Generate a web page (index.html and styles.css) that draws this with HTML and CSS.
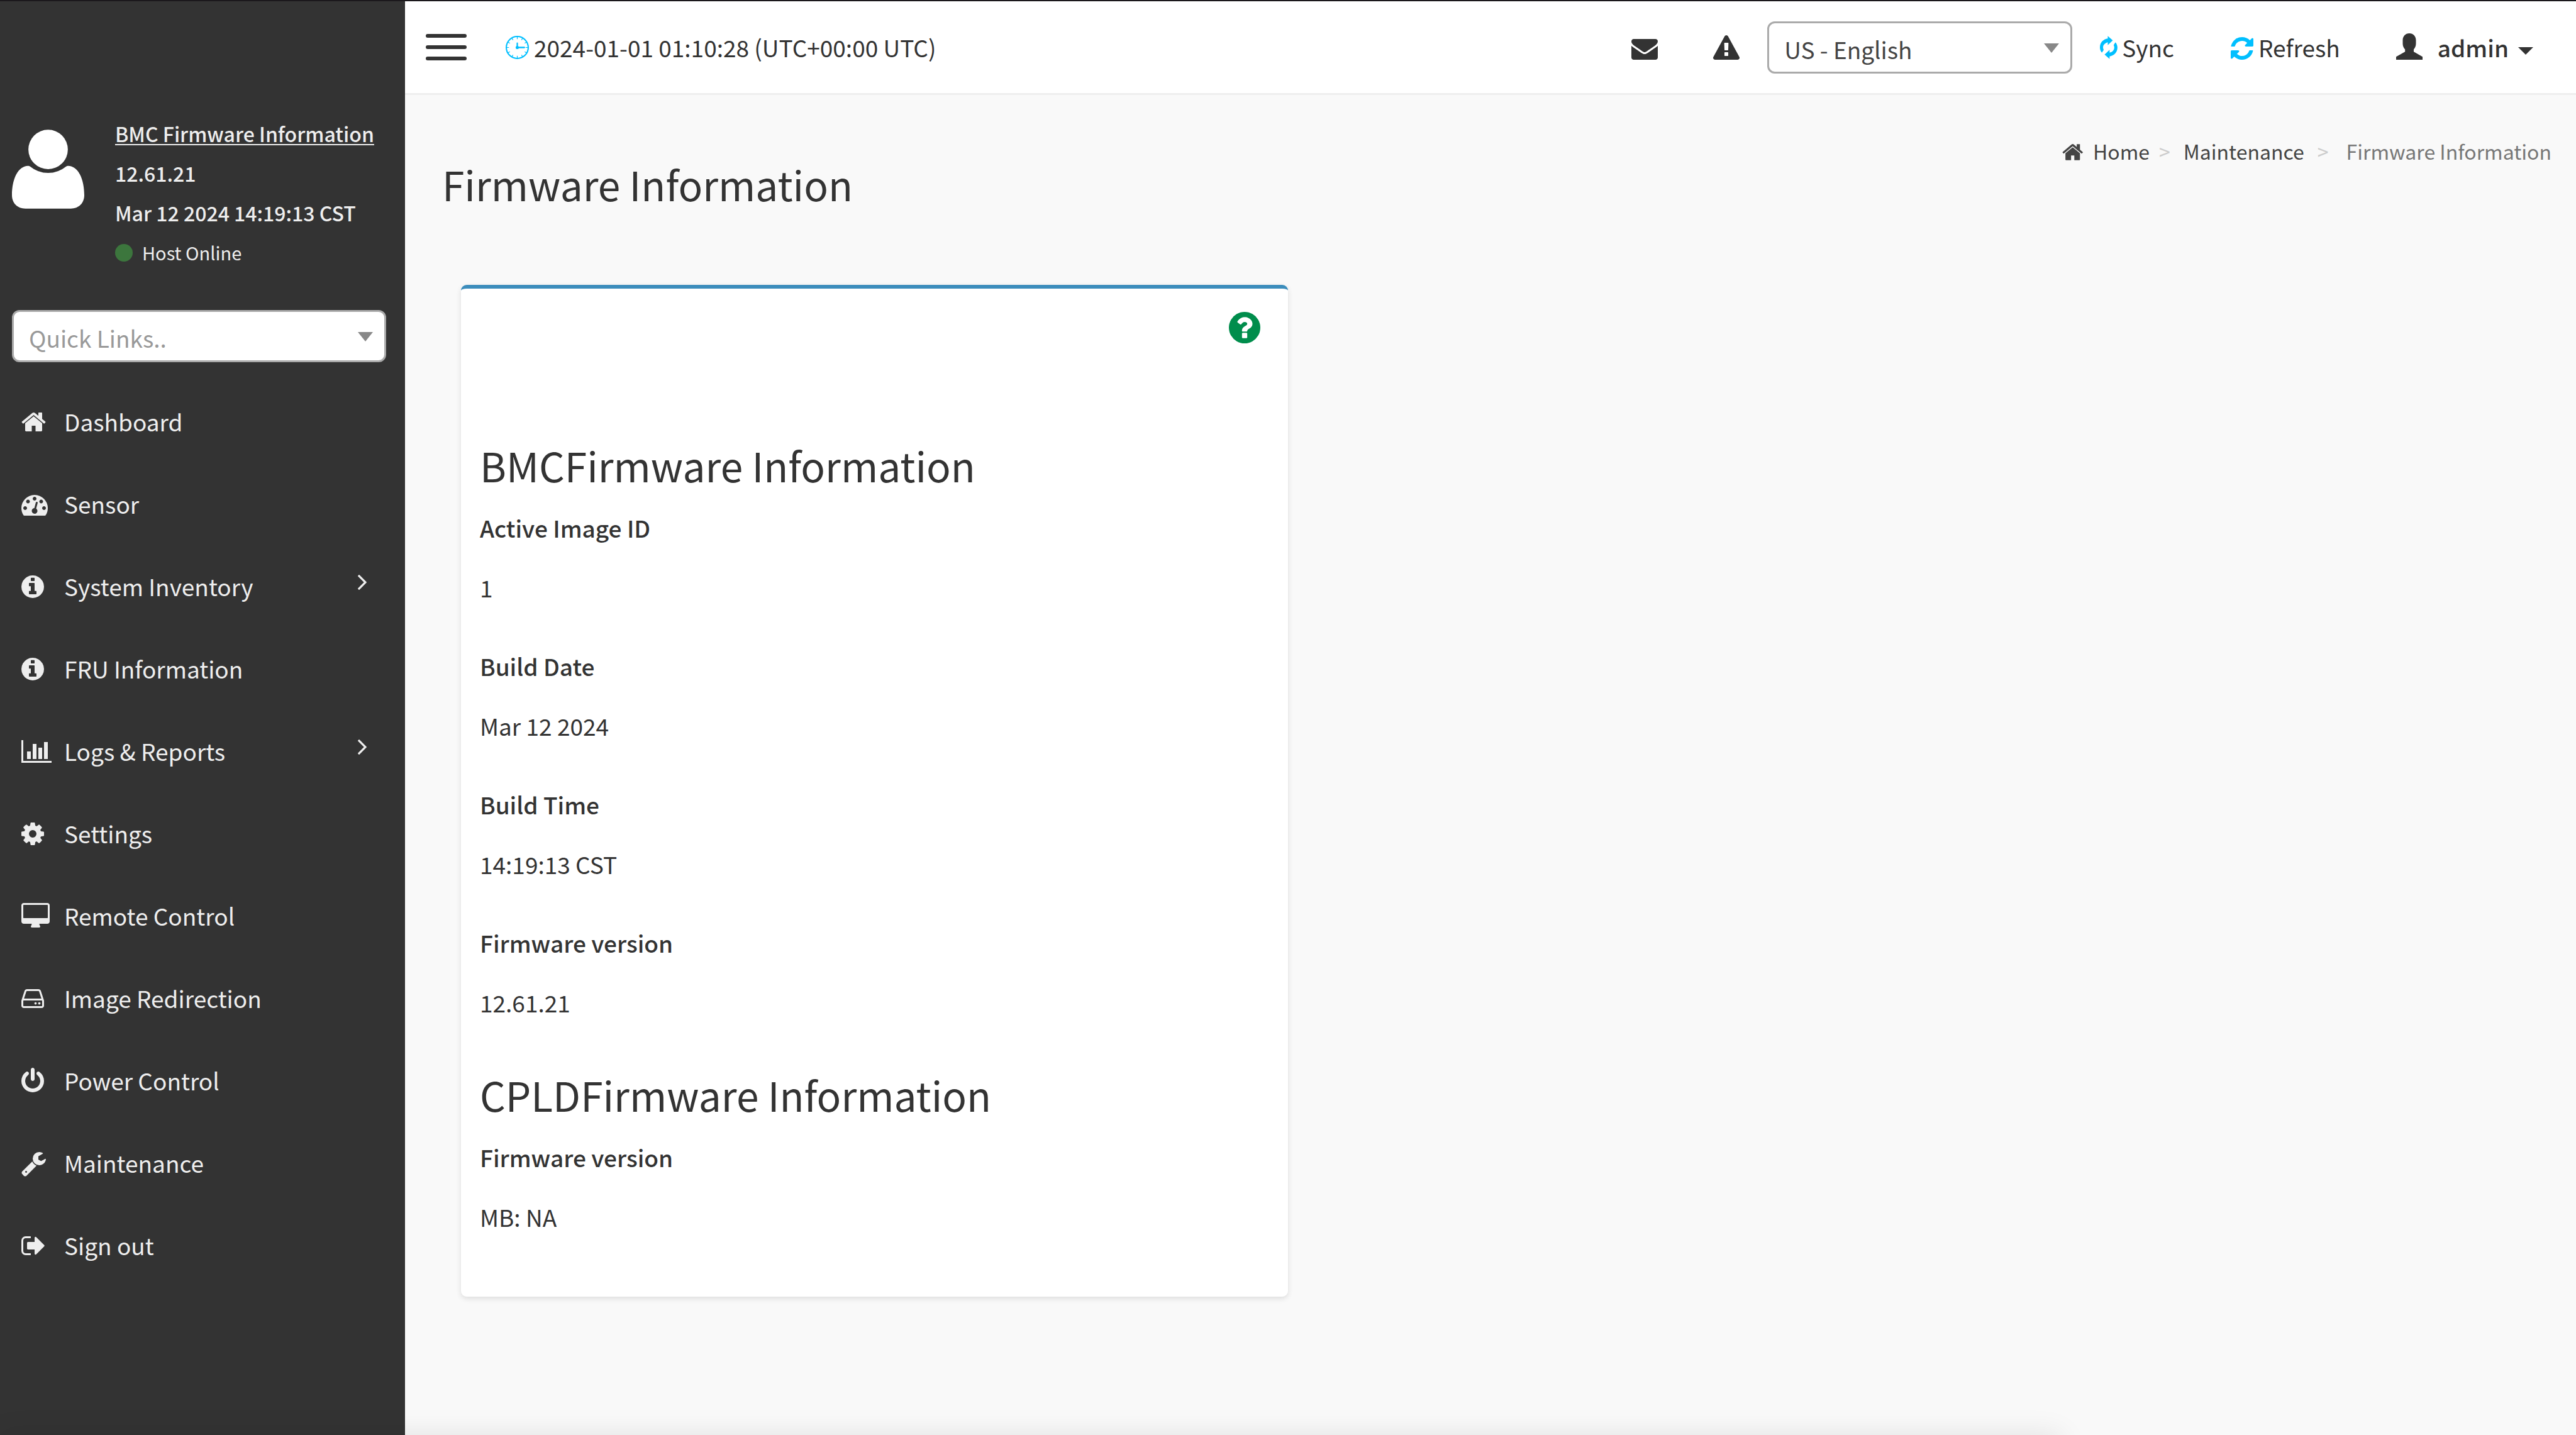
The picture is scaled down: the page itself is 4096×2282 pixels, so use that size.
FILE: index.html
```html
<!DOCTYPE html>
<html lang="en">
<head>
<meta charset="utf-8">
<title>Firmware Information</title>
<link rel="stylesheet" href="styles.css">
</head>
<body>
<svg class="sprite" aria-hidden="true">
  <symbol id="home" viewBox="64 0 1792 1792"><path d="M1472 992v480q0 26-19 45t-45 19h-384v-384h-256v384h-384q-26 0-45-19t-19-45v-480q0-1 .5-3t.5-3l575-474 575 474q1 2 1 6zm223-69l-62 74q-8 9-21 11h-3q-13 0-21-7l-692-577-692 577q-12 8-24 7-13-2-21-11l-62-74q-8-10-7-23.5t11-21.5l719-599q32-26 76-26t76 26l244 204v-195q0-14 9-23t23-9h192q14 0 23 9t9 23v408l219 182q10 8 11 21.5t-7 23.5z"/></symbol>
  <symbol id="gauge" viewBox="0 0 1792 1792"><path d="M384 1152q0-53-37.5-90.5t-90.5-37.5-90.5 37.5-37.5 90.5 37.5 90.5 90.5 37.5 90.5-37.5 37.5-90.5zm192-448q0-53-37.5-90.5t-90.5-37.5-90.5 37.5-37.5 90.5 37.5 90.5 90.5 37.5 90.5-37.5 37.5-90.5zm428 481l101-382q6-26-7.5-48.5t-38.5-29.5-48 6.5-30 39.5l-101 382q-60 5-107 43.5t-63 98.5q-20 77 20 146t117 89 146-20 89-117q16-60-6-117t-72-91zm660-33q0-53-37.5-90.5t-90.5-37.5-90.5 37.5-37.5 90.5 37.5 90.5 90.5 37.5 90.5-37.5 37.5-90.5zm-640-640q0-53-37.5-90.5t-90.5-37.5-90.5 37.5-37.5 90.5 37.5 90.5 90.5 37.5 90.5-37.5 37.5-90.5zm448 192q0-53-37.5-90.5t-90.5-37.5-90.5 37.5-37.5 90.5 37.5 90.5 90.5 37.5 90.5-37.5 37.5-90.5zm320 448q0 261-141 483-19 29-54 29h-1402q-35 0-54-29-141-221-141-483 0-182 71-348t191-286 286-191 348-71 348 71 286 191 191 286 71 348z"/></symbol>
  <symbol id="info" viewBox="128 0 1792 1792"><path d="M1152 1376v-160q0-14-9-23t-23-9h-96v-512q0-14-9-23t-23-9h-320q-14 0-23 9t-9 23v160q0 14 9 23t23 9h96v320h-96q-14 0-23 9t-9 23v160q0 14 9 23t23 9h448q14 0 23-9t9-23zm-128-896v-160q0-14-9-23t-23-9h-192q-14 0-23 9t-9 23v160q0 14 9 23t23 9h192q14 0 23-9t9-23zm640 416q0 209-103 385.5t-279.5 279.5-385.5 103-385.5-103-279.5-279.5-103-385.5 103-385.5 279.5-279.5 385.5-103 385.5 103 279.5 279.5 103 385.5z"/></symbol>
  <symbol id="chart" viewBox="0 0 2048 1792"><path d="M640 896v512h-256v-512h256zm384-512v1024h-256v-1024h256zm1024 1152v128h-2048v-1536h128v1408h1920zm-640-896v768h-256v-768h256zm384-384v1152h-256v-1152h256z"/></symbol>
  <symbol id="cog" viewBox="128 0 1792 1792"><path d="M1152 896q0-106-75-181t-181-75-181 75-75 181 75 181 181 75 181-75 75-181zm512-109v222q0 12-8 23t-20 13l-185 28q-19 54-39 91 35 50 107 138 10 12 10 25t-9 23q-27 37-99 108t-94 71q-12 0-26-9l-138-108q-44 23-91 38-16 136-29 186-7 28-36 28h-222q-14 0-24.5-8.5t-11.5-21.5l-28-184q-49-16-90-37l-141 107q-10 9-25 9-14 0-25-11-126-114-165-168-7-10-7-23 0-12 8-23 15-21 51-66.5t54-70.5q-27-50-41-99l-183-27q-13-2-21-12.5t-8-23.5v-222q0-12 8-23t19-13l186-28q14-46 39-92-40-57-107-138-10-12-10-24 0-10 9-23 26-36 98.5-107.5t94.5-71.5q13 0 26 10l138 107q44-23 91-38 16-136 29-186 7-28 36-28h222q14 0 24.5 8.5t11.5 21.5l28 184q49 16 90 37l142-107q9-9 24-9 13 0 25 10 129 119 165 170 7 8 7 22 0 12-8 23-15 21-51 66.5t-54 70.5q26 50 41 98l183 28q13 2 21 12.5t8 23.5z"/></symbol>
  <symbol id="desktop" viewBox="0 0 2048 1792"><path d="M1792 992v-832q0-13-9.5-22.5t-22.5-9.5h-1600q-13 0-22.5 9.5t-9.5 22.5v832q0 13 9.5 22.5t22.5 9.5h1600q13 0 22.5-9.5t9.5-22.5zm128-832v1088q0 66-47 113t-113 47h-544q0 37 16 77.5t32 71 16 43.5q0 26-19 45t-45 19h-512q-26 0-45-19t-19-45q0-14 16-44t32-70 16-78h-544q-66 0-113-47t-47-113v-1088q0-66 47-113t113-47h1600q66 0 113 47t47 113z"/></symbol>
  <symbol id="disk" viewBox="0 0 1792 1792"><path d="M1040 1216q0 33-23.5 56.5t-56.5 23.5-56.5-23.5-23.5-56.5 23.5-56.5 56.5-23.5 56.5 23.5 23.5 56.5zm256 0q0 33-23.5 56.5t-56.5 23.5-56.5-23.5-23.5-56.5 23.5-56.5 56.5-23.5 56.5 23.5 23.5 56.5zm112 160v-320q0-13-9.5-22.5t-22.5-9.5h-1216q-13 0-22.5 9.5t-9.5 22.5v320q0 13 9.5 22.5t22.5 9.5h1216q13 0 22.5-9.5t9.5-22.5zm-1230-480h1180l-157-482q-4-13-16-21.5t-26-8.5h-782q-14 0-26 8.5t-16 21.5zm1358 160v320q0 66-47 113t-113 47h-1216q-66 0-113-47t-47-113v-320q0-25 16-75l197-606q17-53 63-86t101-33h782q55 0 101 33t63 86l197 606q16 50 16 75z"/></symbol>
  <symbol id="power" viewBox="128 0 1792 1792"><path d="M1664 896q0 156-61 298t-164 245-245 164-298 61-298-61-245-164-164-245-61-298q0-182 80.5-343t226.5-270q43-32 95.5-25t83.5 50q32 42 24.5 94.5t-49.5 84.5q-98 74-151.5 181t-53.5 228q0 104 40.5 198.5t109.5 163.5 163.5 109.5 198.5 40.5 198.5-40.5 163.5-109.5 109.5-163.5 40.5-198.5q0-121-53.5-228t-151.5-181q-42-32-49.5-84.5t24.5-94.5q31-43 84-50t95 25q146 109 226.5 270t80.5 343zm-640-768v640q0 52-38 90t-90 38-90-38-38-90v-640q0-52 38-90t90-38 90 38 38 90z"/></symbol>
  <symbol id="wrench" viewBox="64 0 1792 1792"><path d="M448 1472q0-26-19-45t-45-19-45 19-19 45 19 45 45 19 45-19 19-45zm644-420l-682 682q-37 37-90 37-52 0-91-37l-106-108q-38-36-38-90 0-53 38-91l681-681q39 98 114.5 173.5t173.5 114.5zm634-435q0 39-23 106-47 134-164.5 217.5t-258.5 83.5q-185 0-316.5-131.5t-131.5-316.5 131.5-316.5 316.5-131.5q58 0 121.5 16.5t107.5 46.5q16 11 16 28t-16 28l-293 169v224l193 107q5-3 79-48.5t135.5-81 70.5-35.5q15 0 23.5 10t8.5 25z"/></symbol>
  <symbol id="signout" viewBox="64 0 1792 1792"><path d="M704 1440q0 4 1 20t.5 26.5-3 23.5-10 19.5-20.5 6.5h-320q-119 0-203.5-84.5t-84.5-203.5v-704q0-119 84.5-203.5t203.5-84.5h320q13 0 22.5 9.5t9.5 22.5q0 4 1 20t.5 26.5-3 23.5-10 19.5-20.5 6.5h-320q-66 0-113 47t-47 113v704q0 66 47 113t113 47h312l11.5 1 11.5 3 8 5.5 7 9 2 13.5zm928-544q0 26-19 45l-544 544q-19 19-45 19t-45-19-19-45v-288h-448q-26 0-45-19t-19-45v-384q0-26 19-45t45-19h448v-288q0-26 19-45t45-19 45 19l544 544q19 19 19 45z"/></symbol>
  <symbol id="angle" viewBox="589 461 582 998"><path d="M1171 960q0 13-10 23l-466 466q-10 10-23 10t-23-10l-50-50q-10-10-10-23t10-23l393-393-393-393q-10-10-10-23t10-23l50-50q10-10 23-10t23 10l466 466q10 10 10 23z"/></symbol>
</svg>

<div class="layout">
  <aside class="sidebar">
    <section class="profile">
      <svg class="avatar" viewBox="192 128 1408 1536" aria-hidden="true"><ellipse cx="896" cy="512" rx="384" ry="384"/><path d="M509 833q18 0 36 10q155 126 351 126t351-126q18-10 36-10c200 0 317 260 317 569c0 160-110 262-261 262h-886c-151 0-261-102-261-262c0-309 117-569 317-569z"/></svg>
      <div class="profile-text">
        <a class="profile-link" href="#firmware">BMC Firmware Information</a>
        <p class="profile-strong">12.61.21</p>
        <p class="profile-strong">Mar 12 2024 14:19:13 CST</p>
        <p class="host"><span class="host-dot"></span>Host Online</p>
      </div>
    </section>
    <div class="picker picker-links">
      <select class="picker-field" aria-label="Quick Links"><option>Quick Links..</option></select>
    </div>
    <nav class="menu">
      <a class="menu-item" href="#dashboard"><svg class="icon"><use href="#home"/></svg>Dashboard</a>
      <a class="menu-item" href="#sensor"><svg class="icon"><use href="#gauge"/></svg>Sensor</a>
      <a class="menu-item" href="#inventory"><svg class="icon"><use href="#info"/></svg>System Inventory<svg class="menu-angle"><use href="#angle"/></svg></a>
      <a class="menu-item" href="#fru"><svg class="icon"><use href="#info"/></svg>FRU Information</a>
      <a class="menu-item" href="#logs"><svg class="icon icon-wide"><use href="#chart"/></svg>Logs &amp; Reports<svg class="menu-angle"><use href="#angle"/></svg></a>
      <a class="menu-item" href="#settings"><svg class="icon"><use href="#cog"/></svg>Settings</a>
      <a class="menu-item" href="#remote"><svg class="icon icon-wide"><use href="#desktop"/></svg>Remote Control</a>
      <a class="menu-item" href="#image"><svg class="icon"><use href="#disk"/></svg>Image Redirection</a>
      <a class="menu-item" href="#power-control"><svg class="icon"><use href="#power"/></svg>Power Control</a>
      <a class="menu-item" href="#maintenance"><svg class="icon"><use href="#wrench"/></svg>Maintenance</a>
      <a class="menu-item" href="#sign-out"><svg class="icon"><use href="#signout"/></svg>Sign out</a>
    </nav>
  </aside>

  <div class="page">
    <header class="topbar">
      <button class="toggle" type="button" aria-label="Toggle navigation"><span class="toggle-bar"></span><span class="toggle-bar"></span><span class="toggle-bar"></span></button>
      <div class="clock">
        <svg class="clock-icon" viewBox="0 0 49 49" aria-hidden="true">
          <circle cx="24.5" cy="24.5" r="23.1" fill="none" stroke="currentColor" stroke-width="2.8"/>
          <path fill="none" stroke="currentColor" stroke-width="1.6" d="M24.5 2v5M24.5 42v5M2 24.5h5M42 24.5h5M13.3 5l2.2 3.8M33.5 40.2l2.2 3.8M5 13.3l3.8 2.2M40.2 33.5l3.8 2.2M5 35.7l3.8-2.2M40.2 15.5l3.8-2.2M13.3 44l2.2-3.8M33.5 8.8l2.2-3.8"/>
          <circle cx="24.5" cy="24.5" r="3.4"/>
          <path fill="none" stroke="currentColor" stroke-width="3" stroke-linecap="round" d="M24.5 24.5v-9M24.5 24.5h15"/>
        </svg>
        <span>2024-01-01 01:10:28 (UTC+00:00 UTC)</span>
      </div>
      <div class="tools">
        <a class="tool tool-mail" href="#messages" aria-label="Messages"><svg class="icon" viewBox="0 0 1792 1792"><path d="M1792 710v794q0 66-47 113t-113 47h-1472q-66 0-113-47t-47-113v-794q44 49 101 87 362 246 497 345 57 42 92.5 65.5t94.5 48 110 24.5h2q51 0 110-24.5t94.5-48 92.5-65.5q170-123 498-345 57-39 100-87zm0-294q0 79-49 151t-122 123q-376 261-468 325-10 7-42.5 31t-54 38.5-52 32.5-57.5 27-50 9h-2q-23 0-50-9t-57.5-27-52-32.5-54-38.5-42.5-31q-91-64-262-182.5t-205-142.5q-62-42-117-115.5t-55-136.5q0-78 41.5-130t118.5-52h1472q65 0 112.5 47t47.5 113z"/></svg></a>
        <a class="tool" href="#alerts" aria-label="Alerts"><svg class="icon" viewBox="0 0 1792 1792"><path d="M1024 1375v-190q0-14-9.5-23.5t-22.5-9.5h-192q-13 0-22.5 9.5t-9.5 23.5v190q0 14 9.5 23.5t22.5 9.5h192q13 0 22.5-9.5t9.5-23.5zm-2-374l18-459q0-12-10-19-13-11-24-11h-220q-11 0-24 11-10 7-10 21l17 457q0 10 10 16.5t24 6.5h185q14 0 23.5-6.5t10.5-16.5zm-14-934l768 1408q35 63-2 126-17 29-46.5 46t-63.5 17h-1536q-34 0-63.5-17t-46.5-46q-37-63-2-126l768-1408q17-31 47-49t65-18 65 18 47 49z"/></svg></a>
        <div class="picker picker-language">
          <select class="picker-field" aria-label="Language"><option>US - English</option></select>
        </div>
        <button class="tool tool-sync" type="button"><svg class="sync-icon" viewBox="0 0 37 48" aria-hidden="true"><path id="half" d="M16.5 0L27 9 16.5 19V13C11 14.5 6.6 18 6.6 24c0 2 .5 3.5 1.4 5L4.2 35C1.5 32 0 28 0 24C0 14 7 6.5 16.5 5.3Z"/><use href="#half" transform="rotate(180 18.4 24)"/></svg>Sync</button>
        <button class="tool tool-refresh" type="button"><svg class="icon icon-narrow" viewBox="128 0 1536 1792" aria-hidden="true"><path d="M1639 1056q0 5-1 7-64 268-268 434.5t-478 166.5q-146 0-282.5-55t-243.5-157l-129 129q-19 19-45 19t-45-19-19-45v-448q0-26 19-45t45-19h448q26 0 45 19t19 45-19 45l-137 137q71 66 161 102t187 36q134 0 250-65t186-179q11-17 53-117 8-23 30-23h192q13 0 22.5 9.5t9.5 22.5zm25-800v448q0 26-19 45t-45 19h-448q-26 0-45-19t-19-45 19-45l138-138q-148-137-349-137-134 0-250 65t-186 179q-11 17-53 117-8 23-30 23h-199q-13 0-22.5-9.5t-9.5-22.5v-7q65-268 270-434.5t480-166.5q146 0 284 55.5t245 156.5l130-129q19-19 45-19t45 19 19 45z"/></svg>Refresh</button>
        <button class="tool tool-user" type="button"><svg class="user-icon" viewBox="0 0 56 56" aria-hidden="true"><path d="M28 0C36 0 42 6 42 14.5V22c0 5-2 9-4.700 12v5L56 49.5V56H0V49.5L18.900 39V34C16 31 14 27 14 22V14.5C14 6 20 0 28 0z"/></svg>admin<span class="caret"></span></button>
      </div>
    </header>

    <main class="content" id="firmware">
      <div class="page-head">
        <h1 class="title">Firmware Information</h1>
        <nav aria-label="Breadcrumb">
          <ol class="crumbs">
            <li class="crumb"><a class="crumb-link crumb-home" href="#dashboard"><svg class="crumb-icon"><use href="#home"/></svg>Home</a></li>
            <li class="crumb"><a class="crumb-link crumb-section" href="#maintenance">Maintenance</a></li>
            <li class="crumb crumb-current">Firmware Information</li>
          </ol>
        </nav>
      </div>

      <section class="card">
        <div class="card-tools">
          <button class="help" type="button" aria-label="Help"><svg class="help-icon" viewBox="128 128 1536 1536"><path d="M1024 1376v-192q0-14-9-23t-23-9h-192q-14 0-23 9t-9 23v192q0 14 9 23t23 9h192q14 0 23-9t9-23zm256-672q0-88-55.5-163t-138.5-116-170-41q-243 0-371 213-15 24 8 42l132 100q7 6 19 6 16 0 25-12 53-68 86-92 34-24 86-24 48 0 85.5 26t37.5 59q0 38-20 61t-68 45q-63 28-115.5 86.5t-52.5 125.5v36q0 14 9 23t23 9h192q14 0 23-9t9-23q0-19 21.5-49.5t54.5-49.5q32-18 49-28.5t46-35 44.5-48 28-60.5 12.5-81zm384 192q0 209-103 385.5t-279.5 279.5-385.5 103-385.5-103-279.5-279.5-103-385.5 103-385.5 279.5-279.5 385.5-103 385.5 103 279.5 279.5 103 385.5z"/></svg></button>
        </div>
        <h2 class="card-title">BMCFirmware Information</h2>
        <dl class="facts">
          <dt>Active Image ID</dt><dd>1</dd>
          <dt>Build Date</dt><dd>Mar 12 2024</dd>
          <dt>Build Time</dt><dd>14:19:13 CST</dd>
          <dt>Firmware version</dt><dd>12.61.21</dd>
        </dl>
        <h2 class="card-title">CPLDFirmware Information</h2>
        <dl class="facts">
          <dt>Firmware version</dt><dd>MB: NA</dd>
        </dl>
      </section>
    </main>
  </div>
</div>
<div class="edge-shade"></div>
</body>
</html>
```

FILE: styles.css
```css
* { box-sizing: border-box; }

body {
  margin: 0;
  border-top: 2px solid #1b181c;
  background: #f9f9f9;
  color: #333;
  font-family: "Noto Sans CJK SC", "Open Sans", sans-serif;
  font-size: 37px;
  line-height: 60px;
}

a { color: inherit; text-decoration: none; }
p, h1, h2, dl, dd, ol { margin: 0; padding: 0; }
svg { fill: currentColor; flex: none; }

button {
  border: 0;
  padding: 0;
  background: none;
  color: inherit;
  font: inherit;
  cursor: pointer;
}

.sprite { position: absolute; width: 0; height: 0; }

.layout { display: flex; min-height: calc(100vh - 2px); }

/* Icons set on the text baseline */
.icon { width: 42px; height: 42px; margin-top: 3px; }
.icon-wide { width: 48px; margin-right: -6px; }
.icon-narrow { width: 36px; }

/* Sidebar */
.sidebar {
  flex: none;
  width: 644px;
  padding-top: 179px;
  background: #333;
  color: #eee;
}

.profile { display: flex; padding-left: 19px; gap: 49px; }
.avatar { width: 115px; height: 126px; margin-top: 25px; color: #fff; }
.profile-text { font-size: 32px; line-height: 63px; white-space: nowrap; }
.profile-link,
.profile-strong { display: block; font-weight: 500; }
.profile-link {
  text-decoration: underline;
  text-decoration-thickness: 2px;
  text-underline-offset: 3px;
  text-decoration-skip-ink: none;
}
.host { display: flex; align-items: center; gap: 15px; font-size: 29px; }
.host-dot { width: 28px; height: 28px; border-radius: 50%; background: #3c763d; }

.picker { position: relative; }
.picker::after {
  content: "";
  position: absolute;
  top: 35px;
  right: 21px;
  border: 12px solid transparent;
  border-top: 15px solid #888;
  border-bottom: 0;
  pointer-events: none;
}
.picker-field {
  display: block;
  width: 100%;
  height: 83px;
  padding: 5px 60px 0 24px;
  border: 3px solid #aaa;
  border-radius: 12px;
  background: #fff;
  color: #444;
  font: inherit;
  appearance: none;
}
.picker-links { margin: 60px 30px 28px 19px; }
.picker-links .picker-field { color: #999; }
.picker-language { width: 485px; }

.menu { display: flex; flex-direction: column; }
.menu-item {
  display: flex;
  align-items: center;
  height: 131px;
  padding: 0 61px 0 34px;
  gap: 26px;
}
.menu-angle { width: 14px; height: 24px; margin: 0 0 12px auto; }

/* Top bar */
.page { flex: 1; min-width: 0; }
.topbar {
  display: flex;
  align-items: center;
  height: 149px;
  padding: 0 68px 0 33px;
  border-bottom: 3px solid #eee;
  background: #fff;
  white-space: nowrap;
}
.toggle { display: flex; flex-direction: column; gap: 12px; width: 65px; }
.toggle-bar { height: 6px; border-radius: 3px; background: #333; }
.clock { display: flex; align-items: center; gap: 8px; margin-left: 62px; }
.clock-icon { width: 37px; height: 37px; color: #00bfff; }

.tools { display: flex; align-items: center; gap: 44px; margin-left: auto; }
.tool { display: flex; align-items: center; }
.tool-mail { margin-right: 44px; }
.tool-sync { gap: 7px; }
.sync-icon { width: 28px; height: 37px; color: #00bfff; }
.tool-refresh { gap: 8px; margin-left: 46px; }
.tool-refresh .icon { color: #00bfff; }
.tool-user { gap: 24px; margin-left: 45px; font-weight: 500; }
.user-icon { width: 42px; height: 42px; margin-bottom: 3px; }
.caret {
  margin: 12px 0 0 -9px;
  border: 12px solid transparent;
  border-top-color: #333;
  border-bottom: 0;
}

/* Content */
.content { padding: 66px 39px 60px 59px; }
.page-head { display: flex; justify-content: space-between; align-items: flex-start; }
.title {
  margin-top: 36px;
  font-size: 64px;
  font-weight: 400;
  line-height: 78px;
}
.crumbs {
  display: flex;
  font-size: 32px;
  line-height: 46px;
  list-style: none;
  white-space: nowrap;
}
.crumb { display: flex; align-items: center; }
.crumb + .crumb::before { content: ">"; margin: 0 21px 0 15px; color: #ccc; }
.crumb-link { color: #444; }
.crumb-home { display: flex; align-items: center; gap: 13px; }
.crumb-icon { width: 36px; height: 36px; margin-top: 3px; }
.crumb-section { padding-right: 6px; }
.crumb-current { color: #777; }
.crumb + .crumb-current::before { margin-right: 28px; }

.card {
  width: 39.2%;
  margin: 122px 0 0 30px;
  padding: 37px 30px 32px;
  border-top: 6px solid #3c8dbc;
  border-radius: 9px;
  background: #fff;
  box-shadow: 0 3px 9px rgba(0, 0, 0, .12);
}
.card-tools { display: flex; justify-content: flex-end; padding: 0 14px 142px 0; }
.help { display: flex; color: #008d4c; }
.help-icon { width: 50px; height: 50px; }
.card-title {
  padding-top: 12px;
  margin-bottom: 31px;
  font-size: 64px;
  font-weight: 400;
  line-height: 78px;
}
.facts dt { font-weight: 500; }
.facts dd { margin: 35px 0 65px; }

/* Soft shade along the lower edge of the window */
.edge-shade {
  position: fixed;
  bottom: -40px;
  left: 0;
  right: 20%;
  height: 40px;
  box-shadow: 0 0 45px rgba(0, 0, 0, .1);
  pointer-events: none;
}
```
